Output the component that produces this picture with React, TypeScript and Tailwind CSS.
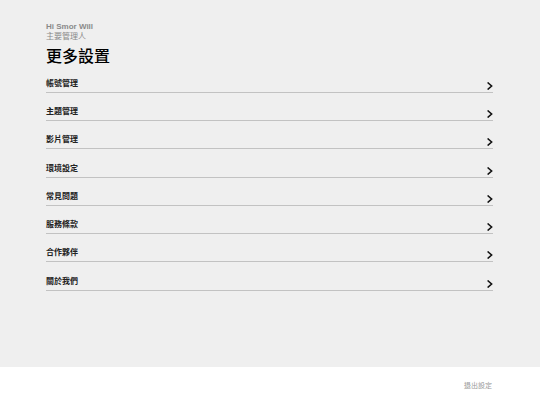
import React from "react";

const items = ["帳號管理", "主題管理", "影片管理", "環境設定", "常見問題", "服務條款", "合作夥伴", "關於我們"];

function Chevron() {
  return (
    <svg width="6" height="8" viewBox="0 0 6 8" className="mb-[-1px]">
      <path d="M1.2 1 L4.6 4 L1.2 7" fill="none" stroke="#111" strokeWidth="1.6" strokeLinecap="square" />
    </svg>
  );
}

export default function App() {
  return (
    <div
      className="w-[540px] h-[405px] flex flex-col overflow-hidden"
      style={{ fontFamily: '"Liberation Sans", "Noto Sans CJK TC", sans-serif' }}
    >
      <div className="flex-1 bg-[#efefef] pl-[46px] pr-[47px] pt-[22px]">
        <p className="text-[8px] leading-[10px] font-bold text-[#8a8a8a]">Hi Smor Will</p>
        <p className="text-[8px] leading-[10px] text-[#8a8a8a]">主要管理人</p>
        <h1 className="mt-[7px] text-[16px] leading-[16px] font-medium text-black">更多設置</h1>
        <div className="flex flex-col mt-[-0.5px]">
          {items.map((t) => (
            <div
              key={t}
              className="h-[28.28px] flex items-end justify-between border-b border-[#c2c2c2] pb-[3px]"
            >
              <span className="text-[8px] leading-[10px] font-bold text-[#222]">{t}</span>
              <Chevron />
            </div>
          ))}
        </div>
      </div>
      <div className="h-[38px] bg-white flex items-center justify-end pr-[48px]">
        <span className="text-[7px] leading-[8px] text-[#999]">退出設定</span>
      </div>
    </div>
  );
}
